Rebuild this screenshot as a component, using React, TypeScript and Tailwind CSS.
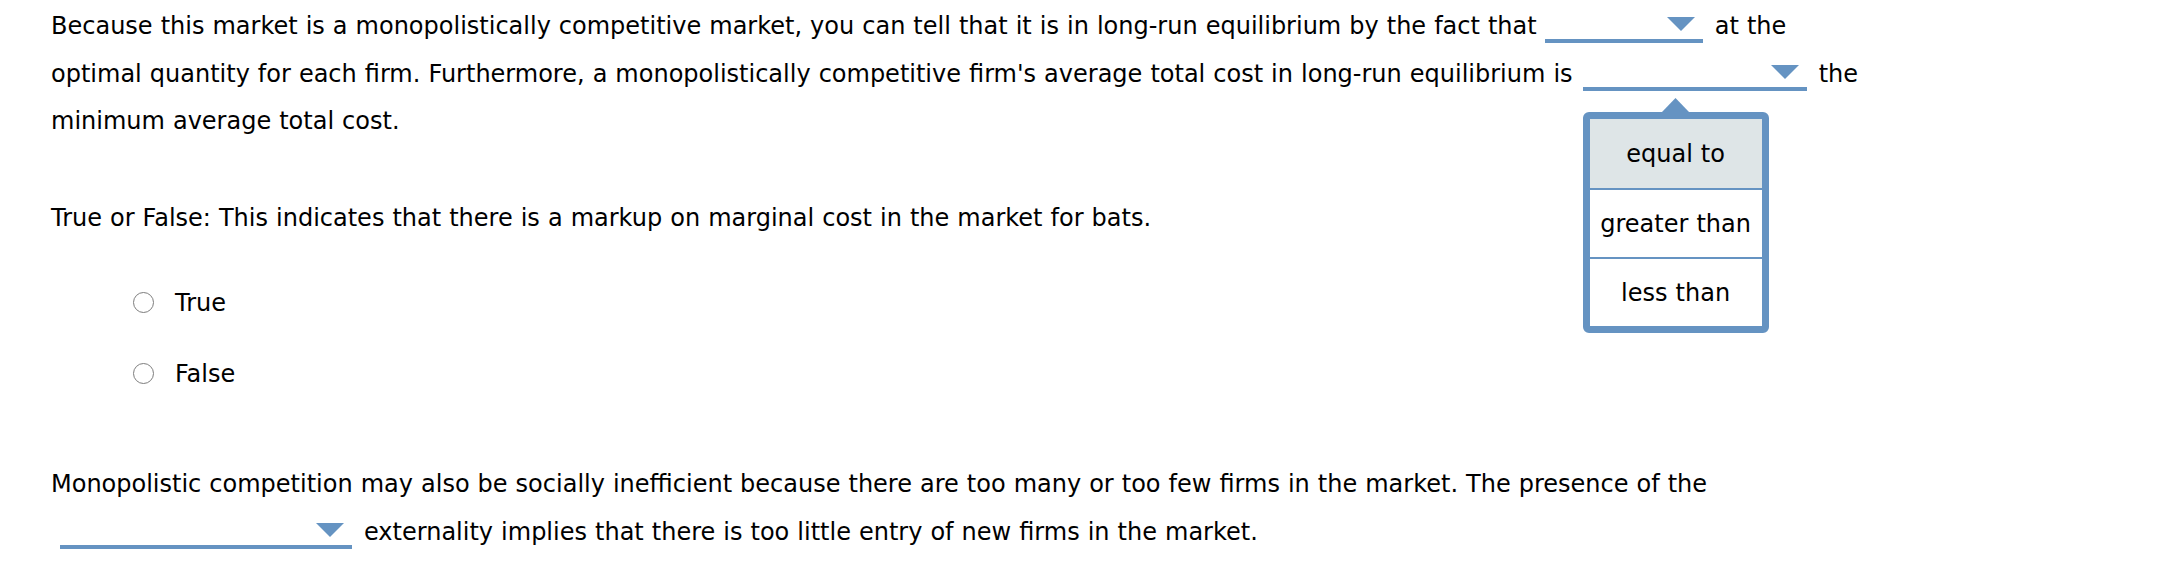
import type { ReactNode } from "react";

function Caret() {
  return (
    <svg
      className="absolute right-[8px] bottom-[8px]"
      width="28"
      height="14"
      viewBox="0 0 28 14"
    >
      <polygon points="0,0 28,0 14,14" fill="#6593c2" />
    </svg>
  );
}

// blank answer slot: underline + caret, sits on the text baseline
function Dropdown({ className, children }: { className: string; children?: ReactNode }) {
  return (
    <span
      className={`relative inline-block h-[30px] mb-[-9px] border-b-4 border-[#6593c2] align-baseline ${className}`}
    >
      <Caret />
      {children}
    </span>
  );
}

const OPTIONS = ["equal to", "greater than", "less than"];

function OptionsMenu() {
  return (
    <span className="absolute left-0 top-[37px] z-10 flex w-[186px] flex-col items-center">
      <svg width="27" height="14" viewBox="0 0 27 14" className="block">
        <polygon points="0,14 13.5,0 27,14" fill="#6593c2" />
      </svg>
      <span className="flex w-full flex-col rounded-[6px] border-[7px] border-[#6593c2] bg-white">
        {OPTIONS.map((o, i) => (
          <span
            key={o}
            className={`flex h-[69px] items-center justify-center pt-[2px] leading-none ${
              i === 0 ? "bg-[#dee5e7]" : "border-t-2 border-[#6593c2]"
            }`}
          >
            {o}
          </span>
        ))}
      </span>
    </span>
  );
}

function Radio({ label }: { label: string }) {
  return (
    <div className="flex h-[47.5px] items-center leading-[47.5px]">
      <span className="mr-[21px] inline-block h-[21px] w-[21px] -translate-y-[1px] rounded-full border-[1.5px] border-[#7d7d7d] bg-white" />
      <span>{label}</span>
    </div>
  );
}

export default function App() {
  return (
    <div
      className="relative h-[569px] w-full overflow-hidden bg-white pl-[51px] text-[24px] text-black [word-spacing:0.4px]"
      style={{ fontFamily: '"DejaVu Sans", Verdana, sans-serif' }}
    >
      <p className="whitespace-nowrap pt-[3px] leading-[47.5px]">
        Because this market is a monopolistically competitive market, you can tell that it is in
        long-run equilibrium by the fact that <Dropdown className="mr-[4px] w-[158px]" /> at the
        <br />
        optimal quantity for each firm. Furthermore, a monopolistically competitive firm's average
        total cost in long-run equilibrium is{" "}
        <Dropdown className="ml-[2px] mr-[4px] w-[224px]">
          <OptionsMenu />
        </Dropdown>{" "}
        the
        <br />
        minimum average total cost.
      </p>

      <p className="mt-[49.5px] whitespace-nowrap leading-[47.5px]">
        True or False: This indicates that there is a markup on marginal cost in the market for
        bats.
      </p>

      <div className="mt-[37.5px] flex flex-col gap-[23.5px] pl-[82px]">
        <Radio label="True" />
        <Radio label="False" />
      </div>

      <p className="mt-[61.5px] whitespace-nowrap leading-[48px]">
        Monopolistic competition may also be socially inefficient because there are too many or
        too few firms in the market. The presence of the
        <br />
        <Dropdown className="ml-[9px] mr-[4px] w-[292px]" /> externality implies that there is too
        little entry of new firms in the market.
      </p>
    </div>
  );
}
